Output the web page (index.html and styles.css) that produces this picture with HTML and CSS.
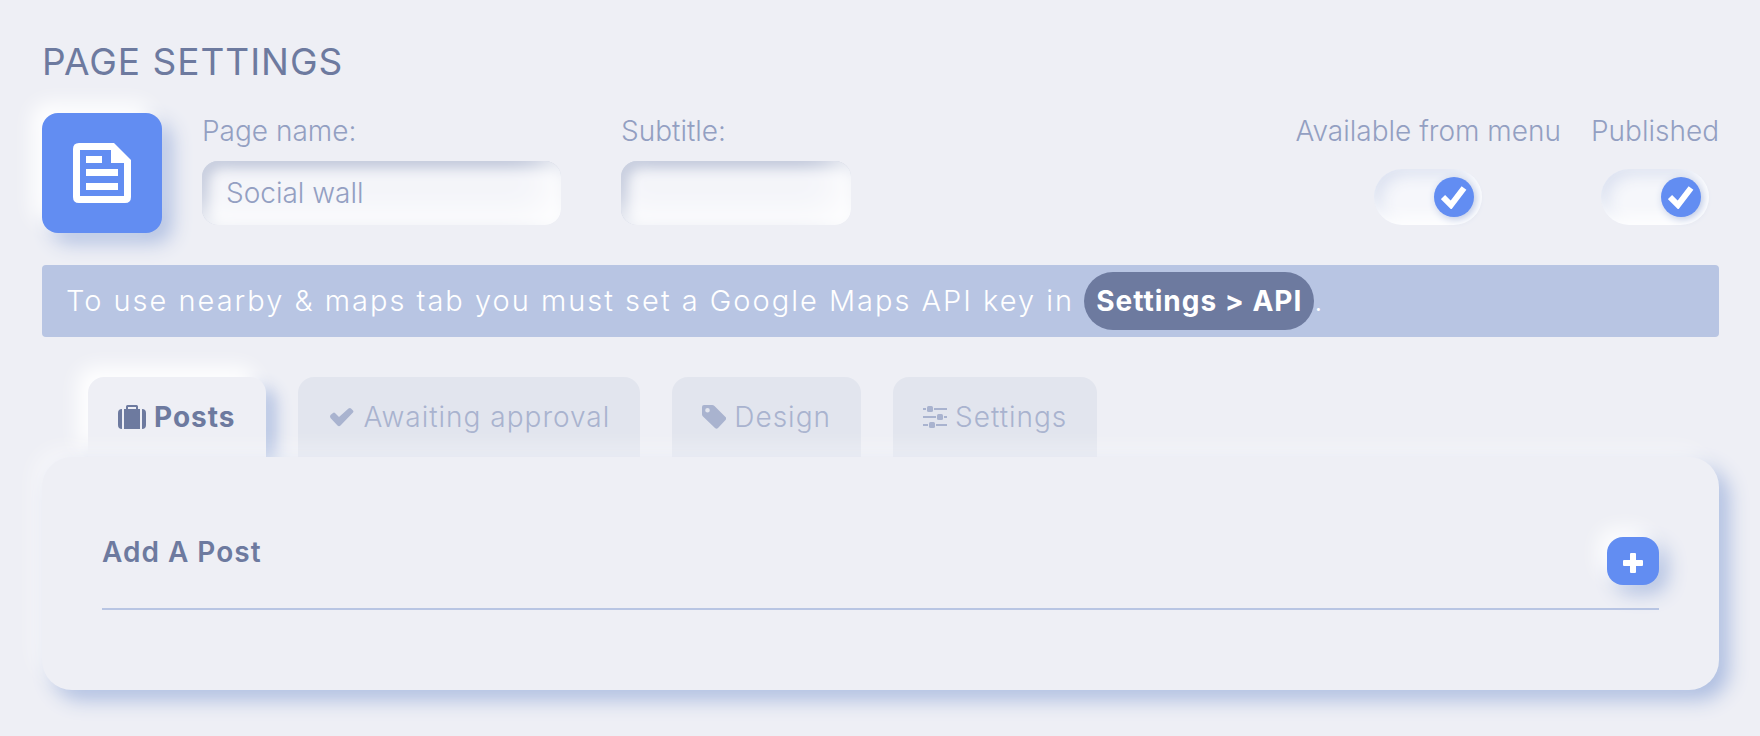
FILE: index.html
```html
<!DOCTYPE html>
<html lang="en">
  <head>
    <meta charset="UTF-8" />
    <meta name="viewport" content="width=device-width, initial-scale=1.0" />
    <title>Page Settings</title>
    <link rel="stylesheet" href="styles.css">
  </head>
  <body>
    <main class="page">
      <h1>PAGE SETTINGS</h1>
      <form class="settings">
        <button type="button" class="page-icon" aria-label="Page icon">
          <svg width="58" height="60" viewBox="0 0 58 60">
            <path fill="#fff" fill-rule="evenodd" d="M6 0H41L58 17V54Q58 60 52 60H6Q0 60 0 54V6Q0 0 6 0ZM7 7V53H51V20H38V7ZM13 13H29V20H13ZM13 26H45V33H13ZM13 40H45V47H13Z" />
          </svg>
        </button>
        <div class="field field-name">
          <label for="name">Page name:</label>
          <input type="text" id="name" name="name" value="Social wall" />
        </div>
        <div class="field field-subtitle">
          <label for="subtitle">Subtitle:</label>
          <input type="text" id="subtitle" name="subtitle" />
        </div>
        <div class="toggles">
          <label class="toggle">
            Available from menu
            <input type="checkbox" name="menu" checked />
            <span class="track">
              <span class="knob">
                <svg width="26" height="24" viewBox="0 0 26 24"><path fill="none" stroke="#fff" stroke-width="6" d="M2 12L10 20L23 3" /></svg>
              </span>
            </span>
          </label>
          <label class="toggle">
            Published
            <input type="checkbox" name="published" checked />
            <span class="track">
              <span class="knob">
                <svg width="26" height="24" viewBox="0 0 26 24"><path fill="none" stroke="#fff" stroke-width="6" d="M2 12L10 20L23 3" /></svg>
              </span>
            </span>
          </label>
        </div>
      </form>

      <p class="notice">To use nearby &amp; maps tab you must set a Google Maps API key in <a href="#api">Settings &gt; API</a>.</p>

      <nav class="tabs">
        <button type="button" class="tab active">
          <svg width="28" height="24" viewBox="0 0 28 24">
            <path fill="currentColor" d="M4 4V24Q0 24 0 20V8Q0 4 4 4ZM24 4Q28 4 28 8V20Q28 24 24 24Z" />
            <path fill="currentColor" fill-rule="evenodd" d="M6 4H8V1.500Q8 0 9.500 0H18.500Q20 0 20 1.500V4H22V24H6ZM10 2V4H18V2Z" />
          </svg>
          Posts
        </button>
        <button type="button" class="tab">
          <svg width="28" height="24" viewBox="0 0 28 24">
            <path fill="currentColor" d="M2.500 10L5 8Q6 7 7 8L11 12L20.500 3.500Q22 2.500 23 3.500L25 5.500Q26 6.500 25 7.500L12.500 20.500Q11 22 9.500 20.500L2.500 13Q1.500 11.500 2.500 10Z" />
          </svg>
          Awaiting approval
        </button>
        <button type="button" class="tab">
          <svg width="24" height="24" viewBox="0 0 24 24">
            <path fill="currentColor" fill-rule="evenodd" d="M2 0H10Q11.500 0 12.500 1L23.500 12Q25 13.500 23.500 15L16 23Q14.500 24.500 13 23L1 11.500Q0 10.500 0 9.500V2Q0 0 2 0ZM5.500 3A2.300 2.300 0 1 0 5.500 7.600A2.300 2.300 0 1 0 5.500 3Z" />
          </svg>
          Design
        </button>
        <button type="button" class="tab">
          <svg width="24" height="24" viewBox="0 0 24 24">
            <path stroke="currentColor" stroke-width="2" d="M0 4H3M11 4H24M0 12H13M21 12H24M0 20H5M13 20H24" />
            <g fill="currentColor">
              <rect x="4" y="1" width="6" height="6" rx="1.500" />
              <rect x="14" y="9" width="6" height="6" rx="1.500" />
              <rect x="6" y="17" width="6" height="6" rx="1.500" />
            </g>
          </svg>
          Settings
        </button>
      </nav>

      <section class="panel">
        <div class="panel-head">
          <h2>Add A Post</h2>
          <button type="button" class="add" aria-label="Add post">
            <svg width="20" height="20" viewBox="0 0 20 20">
              <rect x="7" y="0" width="6" height="20" rx="1" fill="#fff" />
              <rect x="0" y="7" width="20" height="6" rx="1" fill="#fff" />
            </svg>
          </button>
        </div>
      </section>
    </main>
  </body>
</html>
```
FILE: styles.css
```css
* {
  box-sizing: border-box;
}
body {
  margin: 0;
  background-color: #eeeff5;
  color: #939fc2;
  font-family: Inter, "Liberation Sans", sans-serif;
  font-size: 28px;
  font-weight: 300;
  line-height: 36px;
}
button,
input {
  font: inherit;
  color: inherit;
  border: none;
}
button {
  cursor: pointer;
}
svg {
  display: block;
  flex: none;
}
.page {
  padding: 40px 41px 46px 42px;
}
h1 {
  margin: 0 0 29px;
  font-size: 37px;
  font-weight: 400;
  line-height: 44px;
  letter-spacing: 1px;
  color: #6d7a9f;
}
.settings {
  display: flex;
  align-items: flex-start;
}
.page-icon {
  display: flex;
  align-items: center;
  justify-content: center;
  width: 120px;
  height: 120px;
  margin-right: 40px;
  border-radius: 16px;
  background-color: #628df2;
  box-shadow: -10px -10px 20px #fff, 10px 10px 20px #b2c1e2;
}
.field {
  display: flex;
  flex-direction: column;
  gap: 12px;
  margin-right: 60px;
}
.field-name {
  width: 359px;
}
.field-subtitle {
  width: 230px;
}
.field input {
  width: 100%;
  height: 64px;
  padding: 0 24px;
  border-radius: 16px;
  background-color: #f3f4f9;
  box-shadow: inset -10px -10px 40px #fff, inset 5px 5px 14px #9ba6c4;
}
.toggles {
  display: flex;
  gap: 30px;
  margin-left: auto;
}
.toggle {
  display: flex;
  flex-direction: column;
  align-items: center;
  gap: 20px;
  cursor: pointer;
}
.toggle input {
  position: absolute;
  opacity: 0;
}
.track {
  display: flex;
  align-items: center;
  width: 108px;
  height: 56px;
  padding: 8px;
  border-radius: 28px;
  background-color: #f6f7fb;
  box-shadow: inset -8px -8px 16px #fff, inset 6px 6px 16px #dbe1f0;
}
.knob {
  display: flex;
  align-items: center;
  justify-content: center;
  width: 40px;
  height: 40px;
  border-radius: 50%;
  background-color: #b8c5e3;
}
.toggle input:checked + .track .knob {
  margin-left: auto;
  background-color: #628df2;
  box-shadow: 2px 2px 8px #b8c5e3;
}
.notice {
  margin: 32px 0 40px;
  padding: 7px 24px;
  border-radius: 4px;
  background-color: #b8c5e3;
  color: #fff;
  font-size: 29px;
  line-height: 58px;
  letter-spacing: 2px;
}
.notice a {
  display: inline-block;
  padding: 0 12px;
  border-radius: 29px;
  background-color: #6d7a9f;
  color: #fff;
  font-size: 28px;
  font-weight: 700;
  letter-spacing: 1px;
  text-decoration: none;
  vertical-align: top;
}
.tabs {
  display: flex;
  gap: 32px;
  padding-left: 46px;
}
.tab {
  display: flex;
  align-items: center;
  gap: 8px;
  height: 80px;
  padding: 0 30px;
  border-radius: 16px 16px 0 0;
  background-color: #e2e5ee;
  color: #a9b3cf;
  letter-spacing: 1px;
}
.tab.active {
  background-color: #eeeff5;
  color: #6d7a9f;
  font-weight: 700;
  box-shadow: -10px -10px 20px #fff, 10px 10px 16px #b2c1e2;
}
.panel {
  position: relative;
  padding: 80px 60px;
  border-radius: 30px;
  background-color: #eeeff5;
  box-shadow: -10px -10px 20px rgba(255, 255, 255, 0.4), 10px 10px 20px #aebee1;
}
.panel-head {
  display: flex;
  align-items: flex-start;
  justify-content: space-between;
  padding-bottom: 23px;
  border-bottom: 2px solid #b8c5e3;
}
h2 {
  margin: 0;
  font-size: 28px;
  font-weight: 600;
  line-height: 30px;
  letter-spacing: 1px;
  color: #6d7a9f;
}
.add {
  display: flex;
  align-items: center;
  justify-content: center;
  width: 52px;
  height: 48px;
  padding: 4px 0 0;
  border-radius: 16px;
  background-color: #628df2;
  box-shadow: -8px -8px 20px #fff, 8px 8px 20px #aebee1;
}
```
